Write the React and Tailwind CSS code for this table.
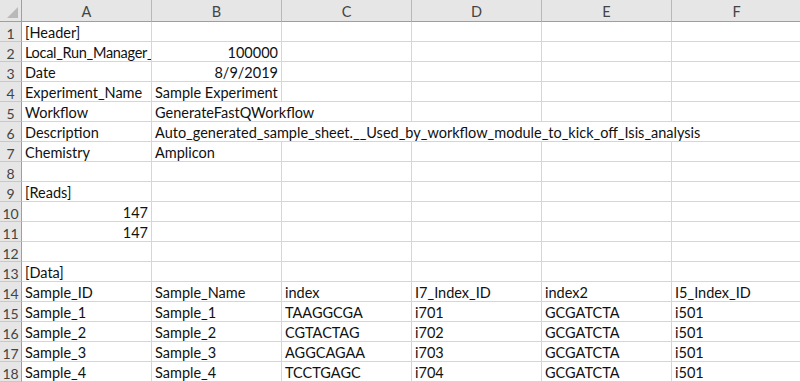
import React from "react";

const COLS = ["A", "B", "C", "D", "E", "F"];

// each row: list of cells { v, span, right, tight }
const ROWS = [
  [{ v: "[Header]" }],
  [{ v: "Local_Run_Manager_", tight: true }, { v: "100000", right: true }],
  [{ v: "Date" }, { v: "8/9/2019", right: true }],
  [{ v: "Experiment_Name" }, { v: "Sample Experiment" }],
  [{ v: "Workflow" }, { v: "GenerateFastQWorkflow", span: 2 }],
  [
    { v: "Description" },
    { v: "Auto_generated_sample_sheet.__Used_by_workflow_module_to_kick_off_Isis_analysis", span: 5 },
  ],
  [{ v: "Chemistry" }, { v: "Amplicon" }],
  [],
  [{ v: "[Reads]" }],
  [{ v: "147", right: true }],
  [{ v: "147", right: true }],
  [],
  [{ v: "[Data]" }],
  [
    { v: "Sample_ID" },
    { v: "Sample_Name" },
    { v: "index" },
    { v: "I7_Index_ID" },
    { v: "index2" },
    { v: "I5_Index_ID" },
  ],
  [{ v: "Sample_1" }, { v: "Sample_1" }, { v: "TAAGGCGA" }, { v: "i701" }, { v: "GCGATCTA" }, { v: "i501" }],
  [{ v: "Sample_2" }, { v: "Sample_2" }, { v: "CGTACTAG" }, { v: "i702" }, { v: "GCGATCTA" }, { v: "i501" }],
  [{ v: "Sample_3" }, { v: "Sample_3" }, { v: "AGGCAGAA" }, { v: "i703" }, { v: "GCGATCTA" }, { v: "i501" }],
  [{ v: "Sample_4" }, { v: "Sample_4" }, { v: "TCCTGAGC" }, { v: "i704" }, { v: "GCGATCTA" }, { v: "i501" }],
];

const spanClass = {
  1: "col-span-1",
  2: "col-span-2",
  5: "col-span-5",
};

// pad a row out with empty cells up to column F
function fillRow(cells) {
  const out = [];
  let used = 0;
  cells.forEach((c) => {
    out.push(c);
    used += c.span || 1;
  });
  while (used < COLS.length) {
    out.push({ v: "" });
    used += 1;
  }
  return out;
}

function Corner() {
  return (
    <div className="h-[22px] bg-[#e6e6e6] border-r border-b border-[#9f9f9f] relative">
      <svg className="absolute left-0 top-0" width="21" height="21" viewBox="0 0 21 21">
        <polygon points="7,18 18,18 18,7" fill="#b9b9b9" />
      </svg>
    </div>
  );
}

export default function App() {
  return (
    <div
      className="w-[800px] h-[382px] overflow-hidden bg-white text-[#111] text-[14.5px]"
      style={{ fontFamily: "Lato, 'Open Sans', sans-serif" }}
    >
      <div className="w-[802px]">
        {/* column letters */}
        <div className="grid grid-cols-[22px_repeat(6,130px)]">
          <Corner />
          {COLS.map((c) => (
            <div
              key={c}
              className="h-[22px] bg-[#e6e6e6] border-r border-b border-r-[#b8b8b8] border-b-[#9f9f9f] flex items-center justify-center text-[#444] pt-[2px]"
            >
              {c}
            </div>
          ))}
        </div>

        {ROWS.map((cells, i) => (
          <div key={i} className="grid grid-cols-[22px_repeat(6,130px)]">
            <div className="h-[20px] bg-[#e6e6e6] border-r border-b border-r-[#9f9f9f] border-b-[#c8c8c8] flex items-center justify-center text-[#444] text-[14px] pt-[3px]">
              {i + 1}
            </div>
            {fillRow(cells).map((c, j) => (
              <div
                key={j}
                className={`${spanClass[c.span || 1]} h-[20px] border-r border-b border-[#d6d6d6] px-[3px] pt-[3px] flex items-center overflow-hidden whitespace-nowrap ${
                  c.right ? "justify-end" : ""
                } ${c.tight ? "tracking-[-0.3px]" : ""}`}
              >
                {c.v}
              </div>
            ))}
          </div>
        ))}
      </div>
    </div>
  );
}
